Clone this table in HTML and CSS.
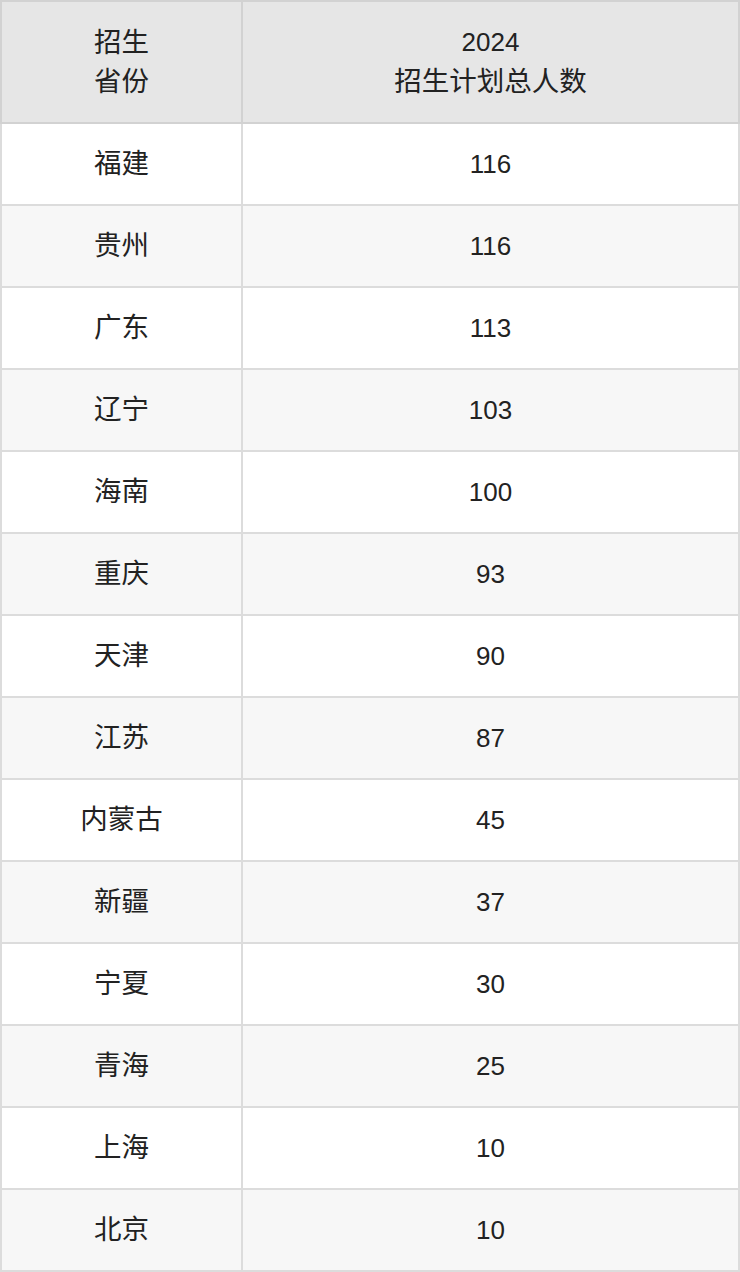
FILE: index.html
```html
<!DOCTYPE html>
<html lang="zh-CN">
<head>
<meta charset="utf-8">
<title>招生计划</title>
<link rel="stylesheet" href="styles.css">
</head>
<body>
<table class="plan">
  <colgroup><col class="col-prov"><col class="col-num"></colgroup>
  <thead>
    <tr><th class="cjk">招生<br>省份</th><th>2024<br><span class="cjk">招生计划总人数</span></th></tr>
  </thead>
  <tbody>
    <tr><td class="cjk">福建</td><td>116</td></tr>
    <tr><td class="cjk">贵州</td><td>116</td></tr>
    <tr><td class="cjk">广东</td><td>113</td></tr>
    <tr><td class="cjk">辽宁</td><td>103</td></tr>
    <tr><td class="cjk">海南</td><td>100</td></tr>
    <tr><td class="cjk">重庆</td><td>93</td></tr>
    <tr><td class="cjk">天津</td><td>90</td></tr>
    <tr><td class="cjk">江苏</td><td>87</td></tr>
    <tr><td class="cjk">内蒙古</td><td>45</td></tr>
    <tr><td class="cjk">新疆</td><td>37</td></tr>
    <tr><td class="cjk">宁夏</td><td>30</td></tr>
    <tr><td class="cjk">青海</td><td>25</td></tr>
    <tr><td class="cjk">上海</td><td>10</td></tr>
    <tr><td class="cjk">北京</td><td>10</td></tr>
  </tbody>
</table>
</body>
</html>
```
FILE: styles.css
```css
html, body {
  margin: 0;
  padding: 0;
  background: #ffffff;
}
body {
  font-family: "Liberation Sans", "Noto Sans CJK SC", sans-serif;
  color: #222222;
}
.plan {
  width: 740px;
  border-collapse: collapse;
  table-layout: fixed;
  border: 2px solid #d6d6d6;
}
.col-prov { width: 241px; }
.plan th, .plan td {
  border: 2px solid #dcdcdc;
  text-align: center;
  vertical-align: middle;
  padding: 0;
  font-size: 26px;
  font-weight: normal;
}
.plan th {
  background: #e6e6e6;
  border-color: #d2d2d2;
  height: 120px;
  line-height: 39px;
}
.plan td {
  height: 80px;
  line-height: 30px;
}
.plan .cjk {
  font-size: 27.5px;
}
.plan tbody tr:nth-child(even) td {
  background: #f7f7f7;
}
```
